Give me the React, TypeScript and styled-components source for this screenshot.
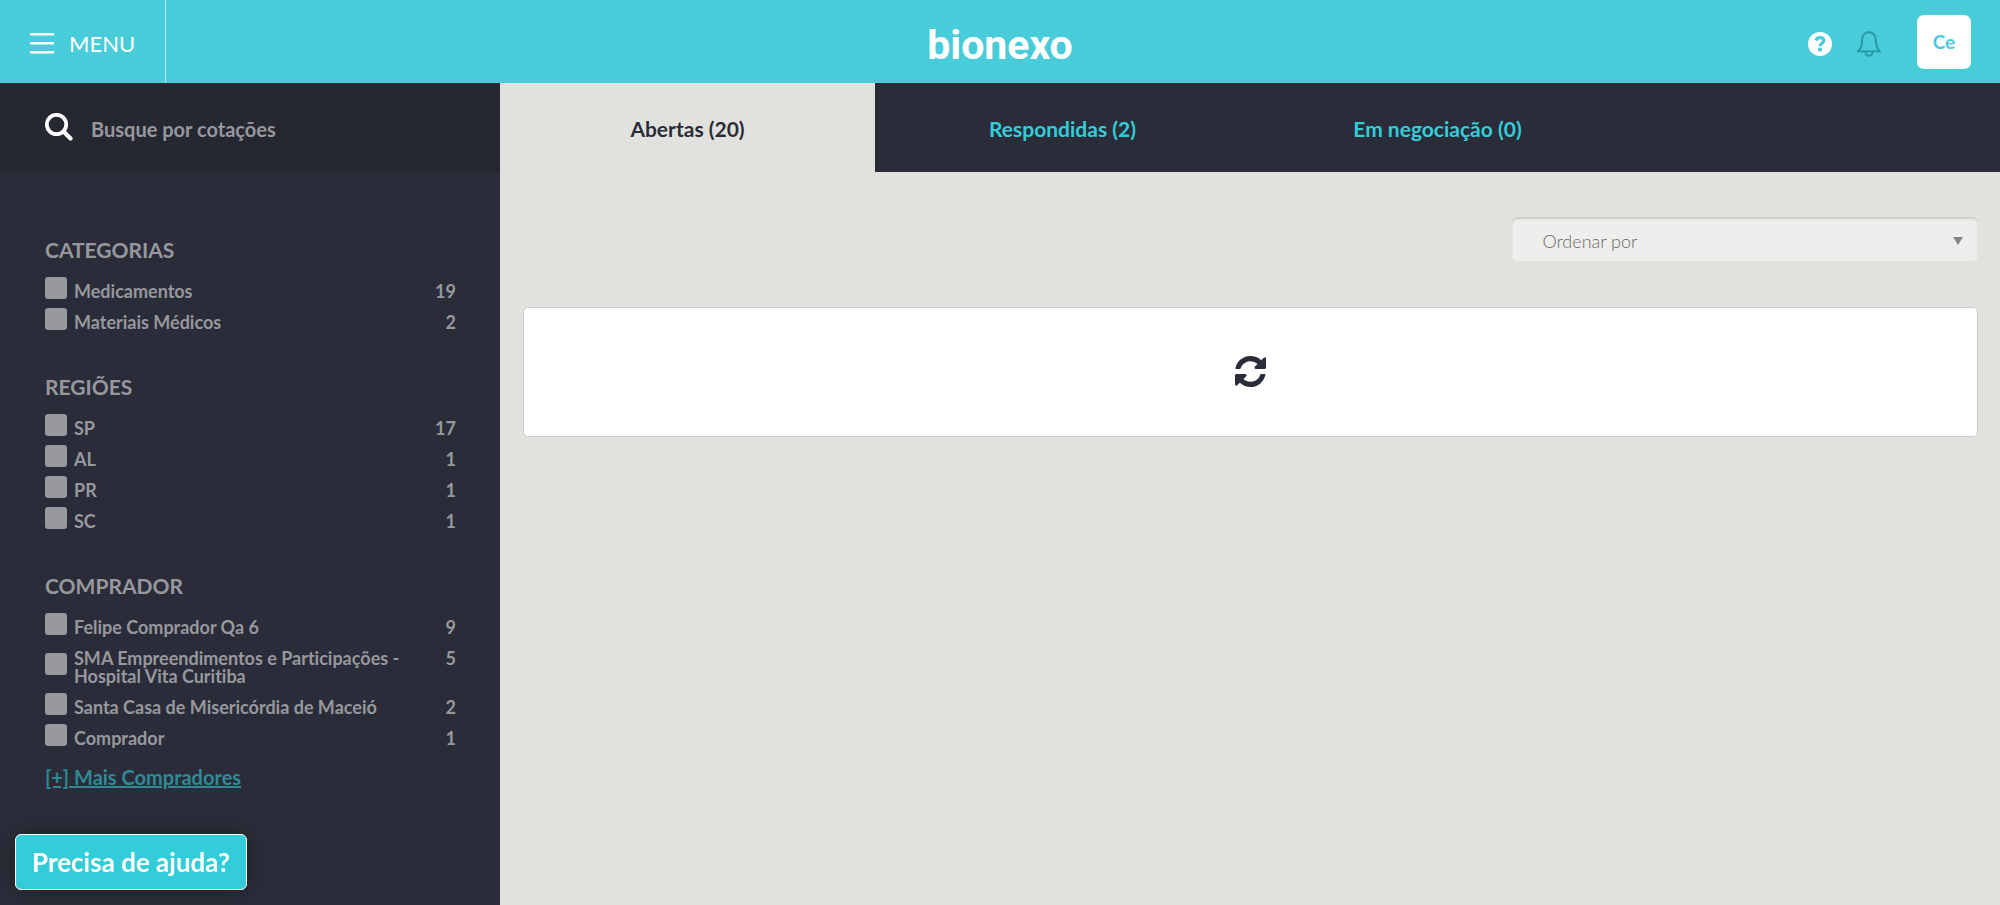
import React from "react";
import styled, { createGlobalStyle } from "styled-components";

const GlobalStyle = createGlobalStyle`
  *, *::before, *::after { box-sizing: border-box; }
  body {
    margin: 0;
    background: #e1e2dd;
    color: #2a2d39;
    font-family: Lato, "Liberation Sans", sans-serif;
    font-size: 20px;
    font-variant-ligatures: none;
  }
  button, input, select { font: inherit; }
`;

const Page = styled.div`
  min-height: 100vh;
  display: flex;
  flex-direction: column;
`;

const Header = styled.header`
  height: 83px;
  background: #48ccd9;
  display: grid;
  grid-template-columns: 1fr auto 1fr;
  align-items: center;
`;

const MenuButton = styled.button`
  justify-self: start;
  align-self: stretch;
  display: flex;
  align-items: center;
  gap: 15px;
  padding: 3px 30px 0 30px;
  border: 0;
  border-right: 1px solid #b5e9ee;
  background: none;
  color: #fff;
  font-size: 22px;
  cursor: pointer;
`;

const Logo = styled.a`
  color: #fff;
  font-family: Roboto, sans-serif;
  font-size: 41px;
  font-weight: 700;
  line-height: 48px;
  padding-top: 6px;
  text-decoration: none;
`;

const Tools = styled.div`
  justify-self: end;
  display: flex;
  align-items: center;
  padding-right: 29px;
`;

const IconButton = styled.button`
  display: flex;
  padding: 4px 0 0;
  margin-right: 25px;
  border: 0;
  background: none;
  cursor: pointer;
`;

const Avatar = styled.button`
  width: 54px;
  height: 54px;
  margin-left: 11px;
  padding: 0;
  border: 0;
  border-radius: 7px;
  background: #fff;
  color: #48ccd9;
  font-size: 19px;
  font-weight: 700;
  cursor: pointer;
`;

const Body = styled.div`
  flex: 1;
  display: grid;
  grid-template-columns: 1fr 3fr;
`;

const Sidebar = styled.aside`
  background: #2a2d39;
  color: #97989d;
  font-weight: 700;
`;

const Search = styled.label`
  display: flex;
  align-items: center;
  gap: 18px;
  height: 89px;
  padding: 0 45px;
  background: #252731;
`;

const SearchInput = styled.input`
  flex: 1;
  min-width: 0;
  padding: 3px 0 0;
  border: 0;
  outline: 0;
  background: none;
  color: #97989d;
  font-size: 20px;
  &::placeholder { color: #97989d; opacity: 1; }
`;

const Filters = styled.form`
  padding: 66px 44px 0 45px;
`;

const Group = styled.fieldset`
  min-width: 0;
  margin: 0 0 37px;
  padding: 0;
  border: 0;
`;

const GroupTitle = styled.legend`
  padding: 0 0 14px;
  font-size: 21px;
  line-height: 24px;
  text-transform: uppercase;
`;

const Option = styled.label`
  display: grid;
  grid-template-columns: 22px 1fr auto;
  column-gap: 7px;
  align-items: center;
  padding-bottom: 7px;
  font-size: 18px;
  line-height: 18px;
  cursor: pointer;
`;

const Tick = styled.input`
  appearance: none;
  width: 22px;
  height: 22px;
  margin: 0;
  border-radius: 3px;
  background: #97989d;
  &:checked { background: #33ccd9; }
`;

const OptionName = styled.span`
  padding: 6px 32px 0 0;
`;

const Count = styled.span`
  align-self: start;
  padding-top: 6px;
`;

const MoreLink = styled.a`
  display: inline-block;
  margin-top: 11px;
  color: #2e8a94;
  line-height: 24px;
  font-size: 20px;
`;

const Main = styled.main`
  min-width: 0;
`;

const Tabs = styled.nav`
  display: grid;
  grid-template-columns: repeat(4, 1fr);
  height: 89px;
  background: #2a2d39;
`;

const Tab = styled.button<{ $active?: boolean }>`
  padding: 1px 0 0;
  border: 0;
  background: ${(p) => (p.$active ? "#e1e2dd" : "transparent")};
  color: ${(p) => (p.$active ? "#2a2d39" : "#33ccd9")};
  font-size: 21px;
  font-weight: 700;
  cursor: pointer;
`;

const Content = styled.div`
  padding: 45px 22px 45px 23px;
`;

const SortBox = styled.div`
  position: relative;
  width: 32%;
  height: 44px;
  margin: 0 0 46px auto;
`;

const SortSelect = styled.select`
  appearance: none;
  width: 100%;
  height: 100%;
  padding: 3px 40px 0 30px;
  border: 0;
  border-radius: 5px;
  background: #eeeeec;
  box-shadow: inset 0 2px 2px #cbccc8;
  color: #6c6c6a;
  font-size: 18px;
  font-weight: 300;
`;

const SortArrow = styled.svg`
  position: absolute;
  right: 15px;
  top: 20px;
  pointer-events: none;
`;

const Card = styled.section`
  display: flex;
  align-items: center;
  justify-content: center;
  height: 130px;
  padding-bottom: 2px;
  border: 1px solid #cbcbc9;
  border-radius: 5px;
  background: #fff;
`;

const HelpButton = styled.button`
  position: fixed;
  left: 15px;
  bottom: 15px;
  height: 56px;
  padding: 0 16px;
  border: 1px solid #fff;
  border-radius: 6px;
  background: #33ccd9;
  box-shadow: 0 0 20px rgba(0, 0, 0, 0.3);
  color: #fff;
  font-size: 26px;
  font-weight: 700;
  cursor: pointer;
`;

const groups = [
  { title: "Categorias", items: [["Medicamentos", 19], ["Materiais Médicos", 2]] },
  { title: "Regiões", items: [["SP", 17], ["AL", 1], ["PR", 1], ["SC", 1]] },
  {
    title: "Comprador",
    more: "[+] Mais Compradores",
    items: [
      ["Felipe Comprador Qa 6", 9],
      ["SMA Empreendimentos e Participações - Hospital Vita Curitiba", 5],
      ["Santa Casa de Misericórdia de Maceió", 2],
      ["Comprador", 1],
    ],
  },
];

export default function App() {
  return (
    <Page>
      <GlobalStyle />
      <Header>
        <MenuButton type="button">
          <svg width="24" height="21" viewBox="0 0 24 21" fill="#fff" aria-hidden="true">
            <path d="M0 0h24v2.600H0zM0 9h24v2.600H0zM0 18h24v2.600H0z" />
          </svg>
          MENU
        </MenuButton>
        <Logo href="#">bionexo</Logo>
        <Tools>
          <IconButton type="button" aria-label="Ajuda">
            <svg width="24" height="24" viewBox="0 0 24 24" fill="none">
              <circle cx="12" cy="12" r="12" fill="#fff" />
              <path d="M7.800 8.400C9 6.400 10.400 5.700 12.100 5.700c2.200 0 3.700 1.200 3.700 2.900 0 2.800-3.700 2.600-3.700 5.600" stroke="#48ccd9" strokeWidth="3.200" />
              <circle cx="12" cy="17.700" r="2.100" fill="#48ccd9" />
            </svg>
          </IconButton>
          <IconButton type="button" aria-label="Notificações">
            <svg width="24" height="26" viewBox="0 0 24 26" fill="none" stroke="#2597a3" strokeWidth="1.900" strokeLinejoin="round">
              <path d="M12 1.200c-4.300 0-6.800 3.200-6.800 7.200 0 6.500-1.200 9-4.200 12h22c-3-3-4.200-5.500-4.200-12 0-4-2.500-7.200-6.800-7.200z" />
              <path d="M8.500 20.500c0 2.600 1.400 4.200 3.500 4.200s3.500-1.600 3.500-4.200" />
            </svg>
          </IconButton>
          <Avatar type="button">Ce</Avatar>
        </Tools>
      </Header>
      <Body>
        <Sidebar>
          <Search>
            <svg width="28" height="30" viewBox="0 0 28 30" fill="none" stroke="#fff" aria-hidden="true">
              <circle cx="11.500" cy="11.500" r="9.700" strokeWidth="3.800" />
              <path d="M18.500 18.500l7 7" strokeWidth="4.200" strokeLinecap="round" />
            </svg>
            <SearchInput type="search" aria-label="Busque por cotações" placeholder="Busque por cotações" />
          </Search>
          <Filters>
            {groups.map((group) => (
              <Group key={group.title}>
                <GroupTitle>{group.title}</GroupTitle>
                {group.items.map(([name, count]) => (
                  <Option key={name}>
                    <Tick type="checkbox" />
                    <OptionName>{name}</OptionName>
                    <Count>{count}</Count>
                  </Option>
                ))}
                {group.more && <MoreLink href="#">{group.more}</MoreLink>}
              </Group>
            ))}
          </Filters>
        </Sidebar>
        <Main>
          <Tabs>
            <Tab type="button" $active>Abertas (20)</Tab>
            <Tab type="button">Respondidas (2)</Tab>
            <Tab type="button">Em negociação (0)</Tab>
          </Tabs>
          <Content>
            <SortBox>
              <SortSelect aria-label="Ordenar por">
                <option>Ordenar por</option>
              </SortSelect>
              <SortArrow width="10" height="8" viewBox="0 0 10 8" aria-hidden="true">
                <path d="M0 0h10L5 8z" fill="#868785" />
              </SortArrow>
            </SortBox>
            <Card aria-label="Carregando">
              <svg width="31" height="31" viewBox="0 0 1536 1536" fill="#2a2d39" aria-hidden="true">
                <path d="M1511 928q0 5-1 7-64 268-268 434.500t-478 166.500q-146 0-282.500-55t-243.500-157l-129 129q-19 19-45 19t-45-19-19-45v-448q0-26 19-45t45-19h448q26 0 45 19t19 45-19 45l-137 137q71 66 161 102t187 36q134 0 250-65t186-179q11-17 53-117 8-23 30-23h192q13 0 22.500 9.500t9.500 22.500zm25-800v448q0 26-19 45t-45 19h-448q-26 0-45-19t-19-45 19-45l138-138q-148-137-349-137-134 0-250 65t-186 179q-11 17-53 117-8 23-30 23h-199q-13 0-22.500-9.500t-9.500-22.500v-7q65-268 270-434.500t480-166.500q146 0 284 55.500t245 156.500l130-129q19-19 45-19t45 19 19 45z" />
              </svg>
            </Card>
          </Content>
        </Main>
      </Body>
      <HelpButton type="button">Precisa de ajuda?</HelpButton>
    </Page>
  );
}
